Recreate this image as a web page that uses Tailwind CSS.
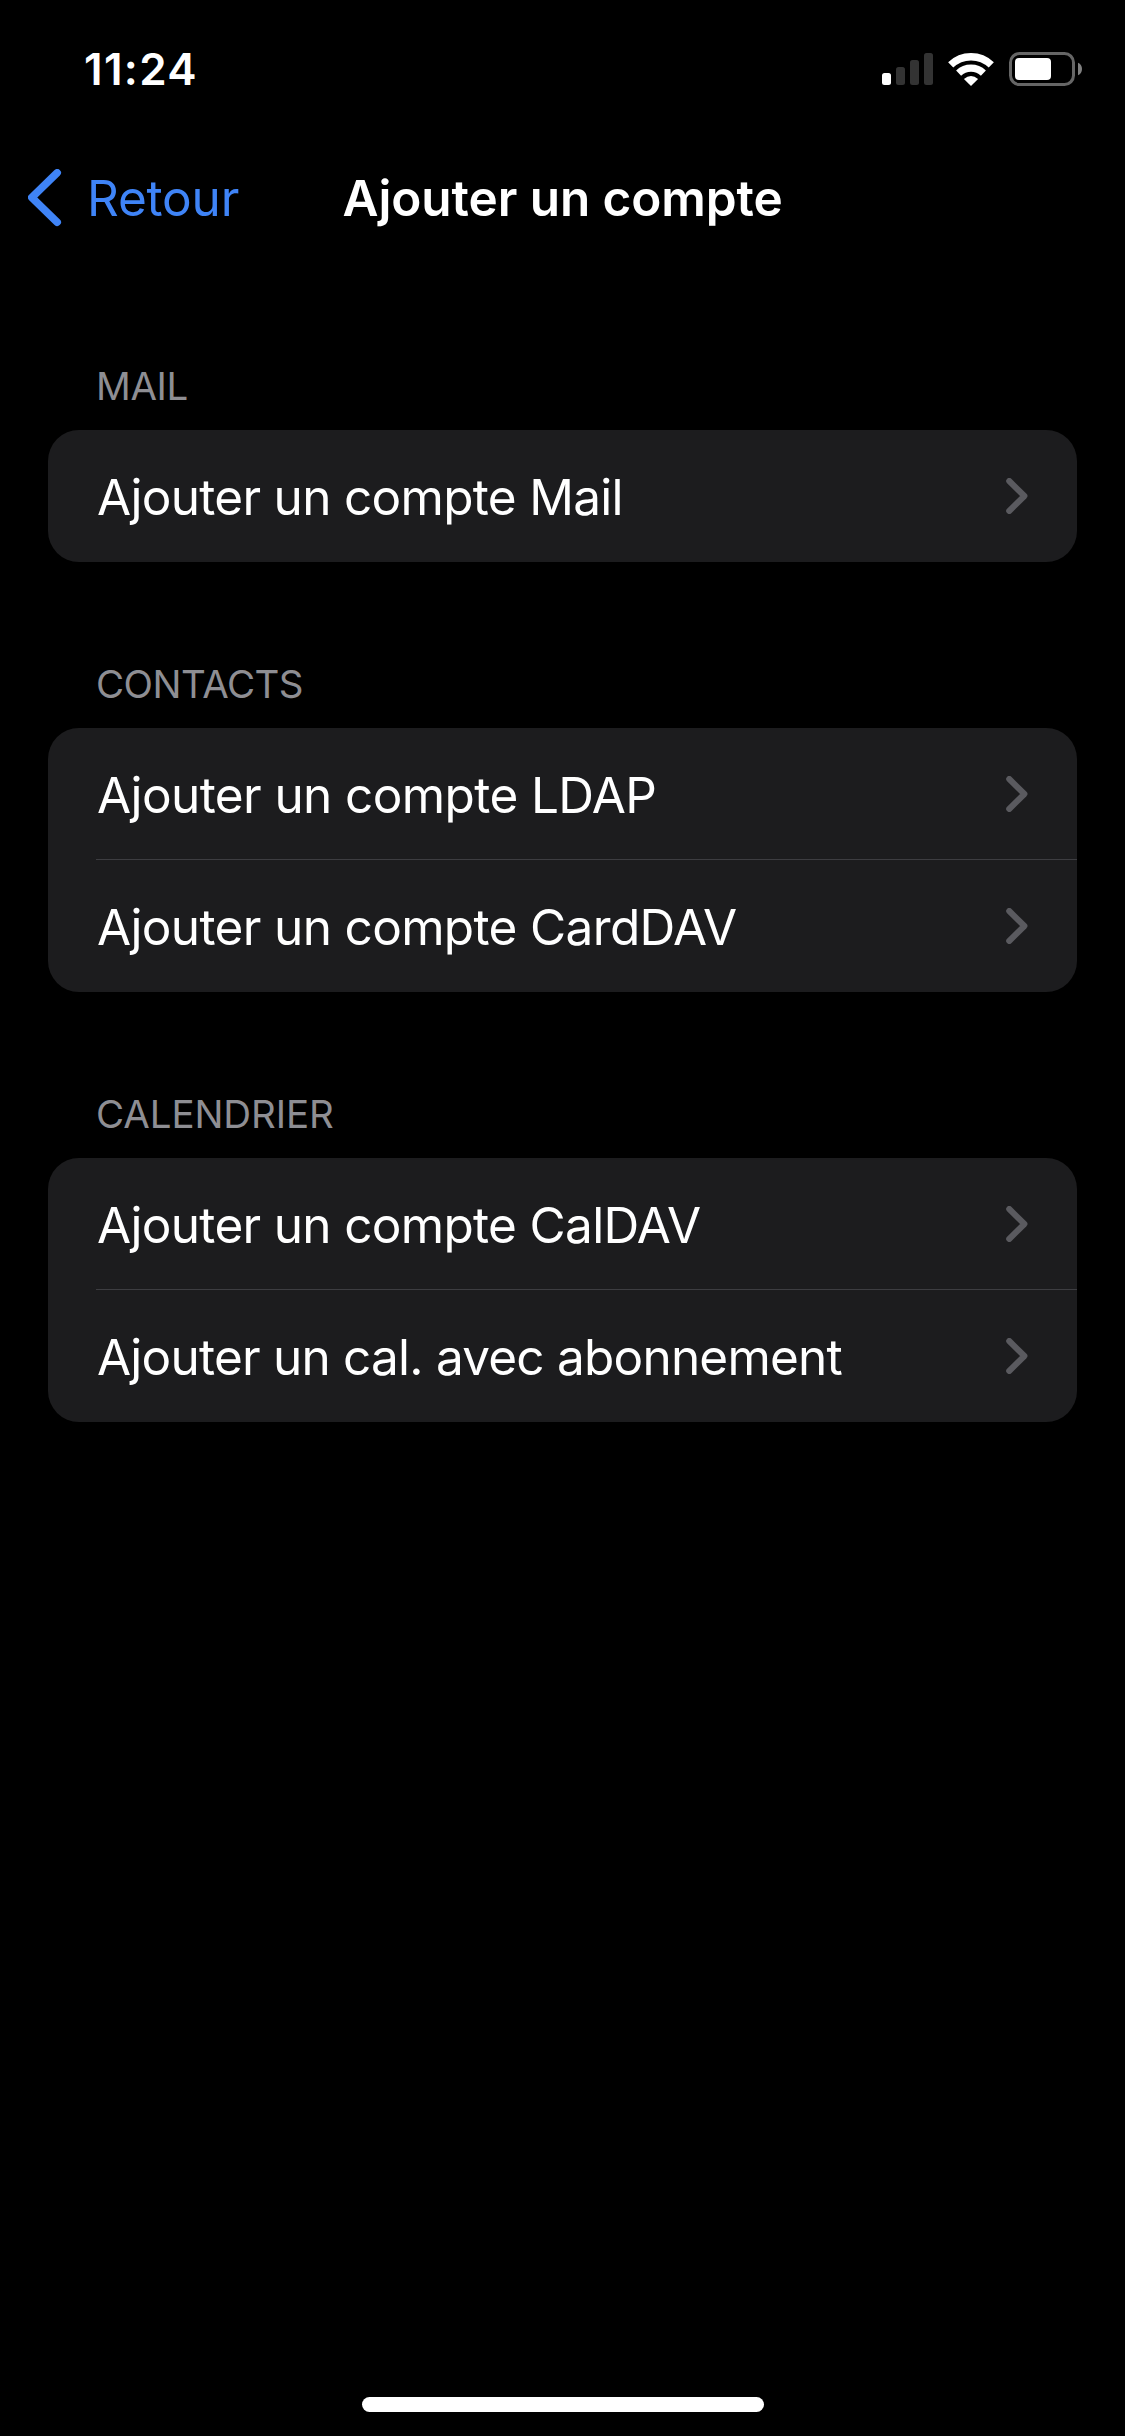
<!DOCTYPE html>
<html lang="fr">

<head>
  <meta charset="UTF-8" />
  <meta name="viewport" content="width=device-width, initial-scale=1.0" />
  <title>Ajouter un compte</title>
  <script src="https://cdn.jsdelivr.net/npm/@tailwindcss/browser@4"></script>
</head>

<body class="bg-black text-white font-['Inter',sans-serif]">
  <svg class="hidden">
    <symbol id="chevron" viewBox="0 0 22 36">
      <path d="M3.2 3 18.4 18 3.2 33" fill="none" stroke="#5a5a5f" stroke-width="6" stroke-linecap="round" stroke-linejoin="round" />
    </symbol>
  </svg>

  <div class="flex flex-col w-[1125px] h-[2436px]">

    <!-- Status bar -->
    <div class="flex items-center justify-between h-[138px] pl-[84px] pr-[43px]">
      <div class="text-[44px] leading-none font-semibold tracking-[1.3px]">11:24</div>
      <div class="flex items-center">
        <svg class="w-[51px] h-8" viewBox="0 0 51 32">
          <rect x="0" y="20" width="9" height="12" rx="2.5" fill="#fff" />
          <rect x="14" y="14" width="9" height="18" rx="2.5" fill="#333" />
          <rect x="28" y="7" width="9" height="25" rx="2.5" fill="#333" />
          <rect x="42" y="0" width="9" height="32" rx="2.5" fill="#333" />
        </svg>
        <svg class="ml-[15px] w-[46px] h-[33px]" viewBox="0 0 46 33">
          <path d="M2.7 11.9A29.3 29.3 0 0 1 43.3 11.9" fill="none" stroke="#fff" stroke-width="7.4" />
          <path d="M10.6 20.1A17.9 17.9 0 0 1 35.4 20.1" fill="none" stroke="#fff" stroke-width="7.2" />
          <path d="M23 33 15.9 26Q23 19.8 30.1 26Z" fill="#fff" />
        </svg>
        <svg class="ml-[15px] w-[73px] h-[34px]" viewBox="0 0 73 34">
          <rect x="1.5" y="1.5" width="63" height="31" rx="9" fill="none" stroke="#666" stroke-width="3" />
          <rect x="6" y="6" width="36" height="22" rx="4" fill="#fff" />
          <path d="M69 10.7Q73 12.5 73 17T69 23.3Z" fill="#808080" />
        </svg>
      </div>
    </div>

    <!-- Navigation bar -->
    <div class="grid grid-cols-[342.5px_1fr] items-center h-[120px] text-[49.5px] leading-[60px]">
      <div class="flex items-center pl-7 text-[#3f84f7]">
        <svg class="w-[34px] h-[58px]" viewBox="0 0 34 58">
          <path d="M29.2 3.8 3.8 28.5 29.2 53.2" fill="none" stroke="currentColor" stroke-width="7.6" stroke-linecap="round" stroke-linejoin="round" />
        </svg>
        <span class="ml-[25px] tracking-[-0.2px]">Retour</span>
      </div>
      <h1 class="font-semibold tracking-[-0.08px]">Ajouter un compte</h1>
    </div>

    <!-- Account groups -->
    <main class="flex flex-col gap-[100px] pt-[106px] px-12 text-[49.5px] leading-[60px]">
      <section>
        <h2 class="pl-12 mb-[22px] text-[38.5px] leading-[44px] tracking-[-0.4px] text-[#8e8e93]">MAIL</h2>
        <div class="bg-[#1c1c1e] rounded-[31px] pl-12">
          <div class="flex items-center justify-between h-[132px] pl-px pr-[49px]">
            <span class="pt-0.5 tracking-[-0.7px]">Ajouter un compte Mail</span>
            <svg class="w-[22px] h-9"><use href="#chevron" /></svg>
          </div>
        </div>
      </section>

      <section>
        <h2 class="pl-12 mb-[22px] text-[38.5px] leading-[44px] tracking-[-0.5px] text-[#8e8e93]">CONTACTS</h2>
        <div class="bg-[#1c1c1e] rounded-[31px] pl-12">
          <div class="flex items-center justify-between h-[132px] pl-px pr-[49px] border-b border-[#3d3d41]">
            <span class="pt-[3px] tracking-[-0.6px]">Ajouter un compte LDAP</span>
            <svg class="w-[22px] h-9"><use href="#chevron" /></svg>
          </div>
          <div class="flex items-center justify-between h-[132px] pl-px pr-[49px]">
            <span class="pt-0.5 tracking-[-0.65px]">Ajouter un compte CardDAV</span>
            <svg class="w-[22px] h-9"><use href="#chevron" /></svg>
          </div>
        </div>
      </section>

      <section>
        <h2 class="pl-12 mb-[22px] text-[38.5px] leading-[44px] tracking-[-0.1px] text-[#8e8e93]">CALENDRIER</h2>
        <div class="bg-[#1c1c1e] rounded-[31px] pl-12">
          <div class="flex items-center justify-between h-[132px] pl-px pr-[49px] border-b border-[#3d3d41]">
            <span class="pt-[3px] tracking-[-0.68px]">Ajouter un compte CalDAV</span>
            <svg class="w-[22px] h-9"><use href="#chevron" /></svg>
          </div>
          <div class="flex items-center justify-between h-[132px] pl-px pr-[49px]">
            <span class="pt-0.5 tracking-[-0.78px]">Ajouter un cal. avec abonnement</span>
            <svg class="w-[22px] h-9"><use href="#chevron" /></svg>
          </div>
        </div>
      </section>
    </main>

    <!-- Home indicator -->
    <div class="mt-auto mb-6 ml-[362px] w-[402px] h-[15px] rounded-full bg-white"></div>
  </div>
</body>

</html>
